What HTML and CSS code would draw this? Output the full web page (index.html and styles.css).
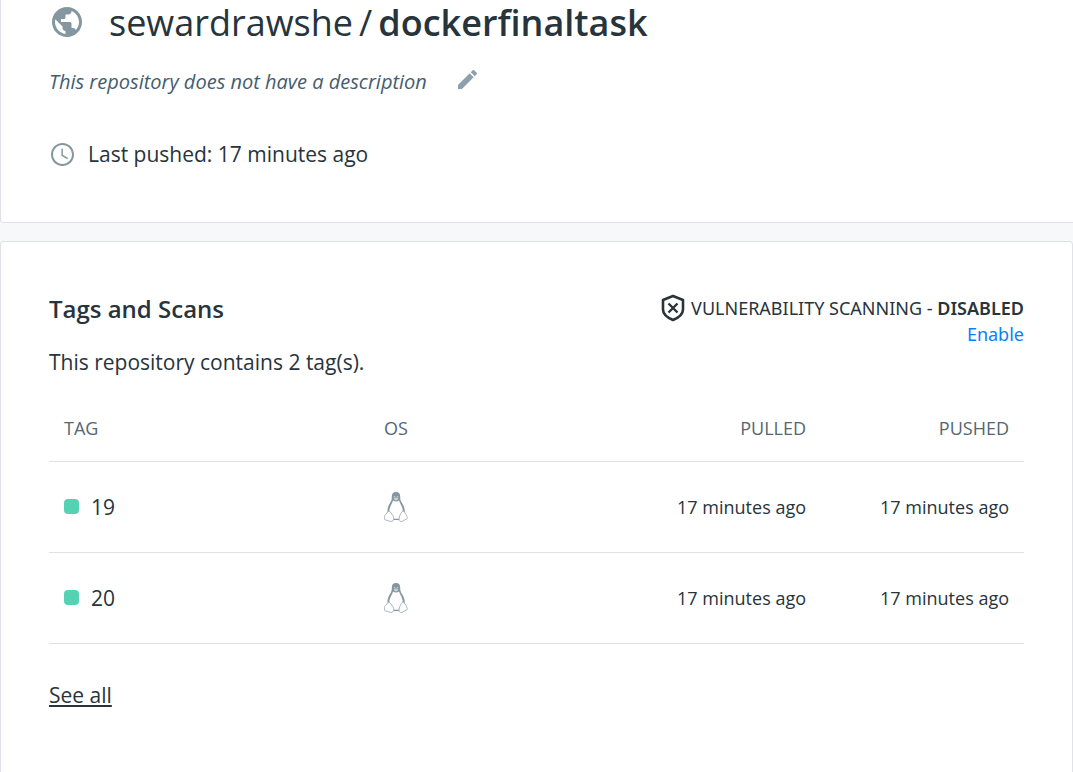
FILE: index.html
```html
<!DOCTYPE html>
<html lang="en">
<head>
<meta charset="utf-8">
<title>sewardrawshe/dockerfinaltask</title>
<link rel="stylesheet" href="styles.css">
</head>
<body>
<svg class="sprite" aria-hidden="true">
  <symbol id="tux" viewBox="0 0 24 30">
    <path d="M12 0C9 0 7.700 1.900 7.800 4.700c.1 3.200-.7 4.600-2.100 6.800C4 14.200 3.200 17 3.600 21L7 28h10l3.800-7c.2-4-.8-6.800-2.500-9.500-1.400-2.200-2.200-3.600-2.100-6.800C16.300 1.900 15 0 12 0z" fill="#8497a0"/>
    <path d="M9 8.500c-.5 2.500-2.800 5.300-3.500 8.500-.4 2.500.2 4 1.700 6L9 26.800h6l1.800-3.800c1.500-2 2.200-3.500 1.800-6-.7-3.200-3-6-3.500-8.500-1.700 1.200-4.400 1.200-6.100 0z" fill="#fff"/>
    <path d="M9.400 6.800 12 5.500l2.700 1.300L12 8.800z" fill="#c9d2d7"/>
    <circle cx="10.600" cy="4.700" r=".8" fill="#c9d2d7"/><circle cx="13.500" cy="4.700" r=".8" fill="#c9d2d7"/>
    <path d="M4.600 19.200c1.600-.2 2.700 2 4.200 4.300 1.500 2.200 1.400 5.300-.9 5.800-2 .4-4.200-1-6.500-1.400-1.300-.3-.9-1.400-.8-2.700.1-1.100-.3-2.100.6-2.600 1.600-.5 1.900-3 3.400-3.400zM19.400 19.200c-1.600-.2-2.300 1.900-3.400 4-1.100 2.200-1.600 5.400.2 6.100 2 .8 3.700-1.100 6-2.200 1.400-.7 1.700-1.300.9-2.300-.8-1-.3-1.600-.9-2.200-1.200-.8-1.300-3.100-2.800-3.400z" fill="#fff" stroke="#9fadb5" stroke-width=".9"/>
  </symbol>
</svg>
<main>
  <section class="card card-summary">
    <div class="title-row">
      <svg class="globe" viewBox="2 2 20 20" aria-hidden="true"><path fill="#8497a0" d="M12 2C6.480 2 2 6.480 2 12s4.480 10 10 10 10-4.480 10-10S17.520 2 12 2zm-1 17.930c-3.950-.49-7-3.850-7-7.930 0-.62.080-1.210.21-1.790L9 15v1c0 1.100.9 2 2 2v1.930zm6.900-2.540c-.26-.81-1-1.390-1.900-1.390h-1v-3c0-.55-.45-1-1-1H8v-2h2c.55 0 1-.45 1-1V7h2c1.100 0 2-.9 2-2v-.41c2.930 1.190 5 4.060 5 7.410 0 2.080-.8 3.970-2.100 5.390z"/></svg>
      <h1><span>sewardrawshe</span><span class="slash">/</span><strong>dockerfinaltask</strong></h1>
    </div>
    <div class="desc-row">
      <p class="description">This repository does not have a description</p>
      <button class="edit" type="button" aria-label="Edit description">
        <svg viewBox="3 3 18 18" aria-hidden="true"><path fill="#8f9fac" d="M3 17.250V21h3.750L17.810 9.940l-3.750-3.750L3 17.250zM20.710 7.040a1 1 0 0 0 0-1.410l-2.340-2.340a1 1 0 0 0-1.410 0l-1.830 1.830 3.750 3.750 1.830-1.830z"/></svg>
      </button>
    </div>
    <div class="pushed-row">
      <svg class="clock" viewBox="2 2 20 20" aria-hidden="true"><path fill="#8497a0" d="M12 2C6.480 2 2 6.480 2 12s4.480 10 10 10 10-4.480 10-10S17.520 2 12 2zm0 18.200c-4.500 0-8.200-3.700-8.200-8.200S7.500 3.800 12 3.800s8.200 3.700 8.200 8.200-3.700 8.200-8.200 8.200zM12.300 7H11v6l5.250 3.150.65-1.070-4.600-2.780z"/></svg>
      <span>Last pushed: 17 minutes ago</span>
    </div>
  </section>

  <section class="card card-tags">
    <div class="tags-head">
      <div>
        <h2>Tags and Scans</h2>
        <p>This repository contains 2 tag(s).</p>
      </div>
      <div class="scanning">
        <div class="scan-status">
          <svg viewBox="0 0 24 28" aria-hidden="true"><path d="M12 2 22 6v9.500c0 4.500-4.500 8.200-10 10.500C6.500 23.700 2 20 2 15.500V6z" fill="none" stroke="#27343b" stroke-width="2.600" stroke-linejoin="round"/><path d="M7.500 9.500l9 9M16.500 9.500l-9 9" stroke="#27343b" stroke-width="2.400"/></svg>
          <span>VULNERABILITY SCANNING - <strong>DISABLED</strong></span>
        </div>
        <a class="enable" href="#">Enable</a>
      </div>
    </div>
    <table>
      <thead>
        <tr><th class="col-tag">TAG</th><th>OS</th><th class="num col-pulled">PULLED</th><th class="num col-pushed">PUSHED</th></tr>
      </thead>
      <tbody>
        <tr>
          <td><div class="tag"><span class="dot"></span>19</div></td>
          <td><svg class="os" role="img" aria-label="Linux"><use href="#tux"/></svg></td>
          <td class="num">17 minutes ago</td><td class="num">17 minutes ago</td>
        </tr>
        <tr>
          <td><div class="tag"><span class="dot"></span>20</div></td>
          <td><svg class="os" role="img" aria-label="Linux"><use href="#tux"/></svg></td>
          <td class="num">17 minutes ago</td><td class="num">17 minutes ago</td>
        </tr>
      </tbody>
    </table>
    <a class="see-all" href="#">See all</a>
  </section>
</main>
</body>
</html>
```
FILE: styles.css
```css
* { box-sizing: border-box; }
html { height: 100%; }
body {
  margin: 0;
  height: 100%;
  background: #f6f8fa;
  color: #27343b;
  font: 21px/28px "Open Sans", "Noto Sans", sans-serif;
}
h1, h2, p { margin: 0; }
svg { display: block; flex: none; }
.sprite { position: absolute; width: 0; height: 0; }
main {
  display: flex;
  flex-direction: column;
  gap: 18px;
  min-height: 100%;
}
.card {
  background: #fff;
  border: 1px solid #dfe3e8;
  padding: 0 48px;
}
.card-summary {
  border-width: 0 0 1px 1px;
  border-radius: 0 0 0 4px;
  padding-bottom: 54px;
}
.card-tags {
  flex: 1;
  border-bottom: 0;
  border-radius: 4px 4px 0 0;
  padding-top: 51px;
  padding-bottom: 62px;
}
.title-row { display: flex; align-items: center; gap: 27px; height: 46px; }
.globe { width: 30px; height: 30px; margin: 0 0 2px 3px; }
h1 { font-size: 36px; line-height: 46px; font-weight: 400; }
h1 strong { font-weight: 600; }
.slash { margin: 0 6px; }
.desc-row { display: flex; align-items: center; gap: 31px; margin-top: 22px; }
.description { font-size: 20px; font-style: italic; color: #445d6e; }
.edit { padding: 0; border: 0; background: none; cursor: pointer; }
.edit svg { width: 19px; height: 19px; margin-bottom: 6px; }
.pushed-row { display: flex; align-items: center; gap: 14px; margin-top: 44px; }
.clock { width: 23px; height: 23px; margin-left: 2px; }
.tags-head { display: flex; justify-content: space-between; align-items: flex-start; }
h2 { font-size: 24px; line-height: 32px; font-weight: 600; }
h2 + p { margin-top: 23px; }
.scanning {
  padding-top: 2px;
  text-align: right;
  font: 18px/26px "Noto Sans", "Open Sans", sans-serif;
}
.scan-status { display: flex; align-items: center; gap: 6px; height: 26px; }
.scan-status svg { width: 24px; height: 28px; }
.scan-status strong { font-weight: 600; }
.enable { color: #087eff; text-decoration: none; }
table { width: 100%; margin-top: 19px; border-collapse: collapse; table-layout: fixed; }
th, td { padding: 0 15px; text-align: left; border-bottom: 1px solid #dfe2e4; }
th { height: 66px; font-size: 18px; font-weight: 400; color: #556671; }
td { height: 91px; }
.num { text-align: right; }
td.num { font-size: 18px; }
.col-tag { width: 320px; }
.col-pulled, .col-pushed { width: 203px; }
.tag { display: flex; align-items: center; gap: 12px; }
.dot { width: 15px; height: 15px; border-radius: 4px; background: #55d2b2; }
.os { width: 24px; height: 30px; }
.see-all { display: inline-block; margin-top: 37px; color: inherit; text-underline-offset: 2px; }
```
